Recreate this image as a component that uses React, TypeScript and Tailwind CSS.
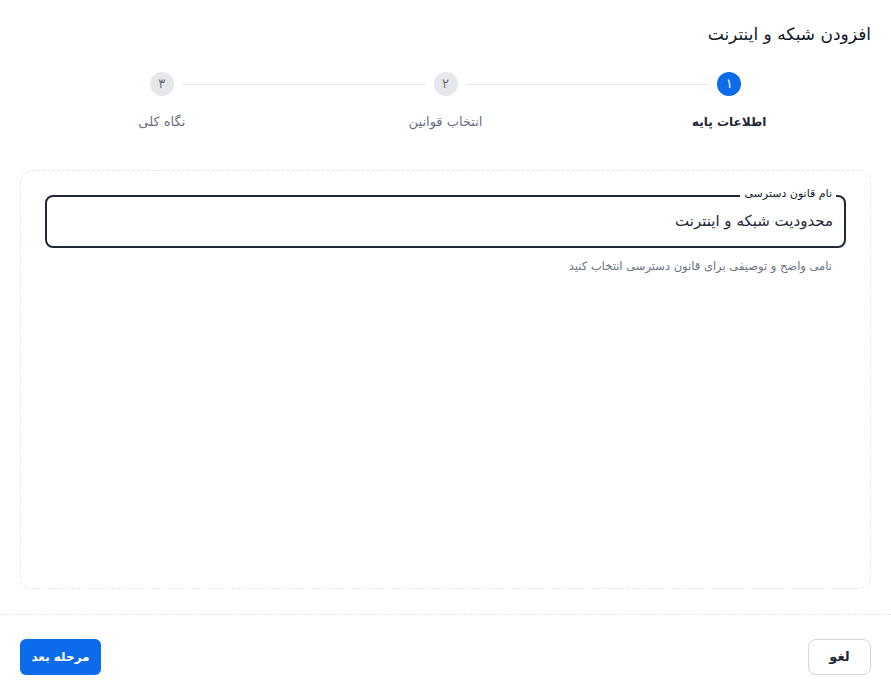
const steps = [
  { n: "۱", label: "اطلاعات پایه" },
  { n: "۲", label: "انتخاب قوانین" },
  { n: "۳", label: "نگاه کلی" },
]

const active = 0

function Stepper() {
  return (
    <div className="grid grid-cols-3 px-5">
      {steps.map((s, i) => {
        const isActive = i === active
        return (
          <div key={i} className="flex flex-col items-center">
            <div className="flex w-full items-center">
              <div className={`h-px flex-1 ${i === 0 ? "" : "bg-[#e5e7eb]"}`} />
              <div
                className={`mx-2 flex h-6 w-6 items-center justify-center rounded-full text-[13px] ${
                  isActive ? "bg-[#0b6bea] text-white" : "bg-[#e5e7eb] text-[#6b7280]"
                }`}
              >
                {s.n}
              </div>
              <div className={`h-px flex-1 ${i === steps.length - 1 ? "" : "bg-[#e5e7eb]"}`} />
            </div>
            <p
              className={`mt-4 leading-5 ${
                isActive ? "text-[12px] font-semibold text-[#1f2937]" : "text-[13px] text-[#6b7280]"
              }`}
            >
              {s.label}
            </p>
          </div>
        )
      })}
    </div>
  )
}

export default function App() {
  return (
    <div
      dir="rtl"
      className="flex h-[692px] w-full flex-col bg-white text-[#1f2937]"
      style={{ fontFamily: '"DejaVu Sans", sans-serif' }}
    >
      {/* Header */}
      <div className="px-5 pt-5">
        <h1 className="text-[17px] leading-7 text-[#111827]">افزودن شبکه و اینترنت</h1>
      </div>

      <div className="mt-6">
        <Stepper />
      </div>

      {/* Body */}
      <div className="mx-5 mt-[38px] h-[419px] rounded-xl border border-dashed border-[#e5e7eb] p-6">
        <div className="relative">
          <span className="absolute -top-[9px] right-2.5 bg-white px-1 text-[11px] leading-4 text-[#111827]">
            نام قانون دسترسی
          </span>
          <div className="flex h-[53px] items-center rounded-lg border-2 border-[#1f2937] pl-3 pr-[11px]">
            <span className="text-[15px] text-[#1f2937]">محدودیت شبکه و اینترنت</span>
          </div>
        </div>
        <p className="mt-2.5 px-3.5 text-[11.5px] leading-4 text-[#6b7280]">
          نامی واضح و توصیفی برای قانون دسترسی انتخاب کنید
        </p>
      </div>

      {/* Footer */}
      <div className="mt-[25px] border-t border-dashed border-[#e5e7eb] px-5 pt-6">
        <div className="flex items-center justify-between">
          <button className="h-9 w-[63px] rounded-lg border border-[#d1d5db] bg-white text-[13px] font-semibold text-[#1f2937]">
            لغو
          </button>
          <button className="h-9 w-[81px] rounded-md bg-[#0b6bea] text-[12px] font-semibold text-white">
            مرحله بعد
          </button>
        </div>
      </div>
    </div>
  )
}
